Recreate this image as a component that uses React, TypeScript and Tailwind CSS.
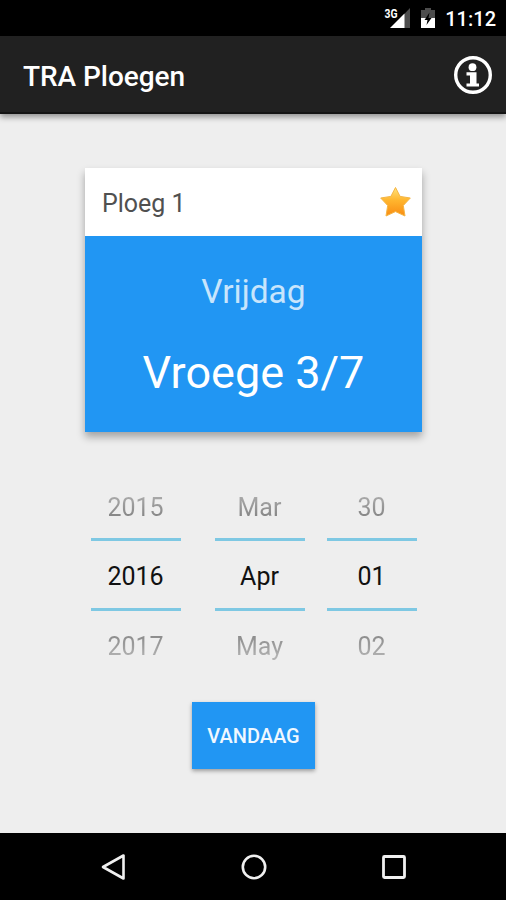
import React, { useState } from 'react';

interface PickerColumnProps {
  values: string[];
  onStep: (step: number) => void;
}

const StatusBar: React.FC = () => (
  <div className="flex h-9 items-center justify-end bg-black pr-[10px] text-white">
    <svg width="28" height="28" viewBox="0 0 28 28" className="mr-[9px]">
      <path d="M27 4v20H8z" fill="#4d4d4d" />
      <path d="M21.500 9.500V24H7z" fill="#fff" />
      <text x="1.500" y="13.500" fontSize="12" fontWeight="700" fill="#fff" stroke="#000" strokeWidth="2" paintOrder="stroke" textLength="13" lengthAdjust="spacingAndGlyphs">3G</text>
    </svg>
    <svg width="16" height="22" viewBox="0 0 16 22" className="mr-[9px]">
      <path d="M5 1h6v2h4v8H1V3h4z" fill="#4d4d4d" />
      <path d="M1 11h14v10H1z" fill="#fff" />
      <path d="M9.500 5.500L4.500 13h3l-1 5L11.500 11h-3z" fill="#000" />
    </svg>
    <span className="pt-[2px] text-[20px] font-medium leading-none">11:12</span>
  </div>
);

const InfoIcon: React.FC = () => (
  <svg width="40" height="40" viewBox="0 0 40 40" className="mt-[2px]">
    <circle cx="20" cy="20" r="17.300" fill="none" stroke="#fff" strokeWidth="3.400" />
    <circle cx="19.500" cy="12.200" r="3.900" fill="#fff" />
    <path d="M13.500 17.200h10v11.300H26V31.500H13.500v-3h3.500v-8h-3.500z" fill="#fff" />
  </svg>
);

const StarIcon: React.FC = () => (
  <svg width="34" height="34" viewBox="0 0 34 34">
    <defs>
      <linearGradient id="star" x1="0" y1="0" x2="0" y2="1">
        <stop offset="0" stopColor="#ffe37a" />
        <stop offset="0.45" stopColor="#ffb52e" />
        <stop offset="1" stopColor="#f98c12" />
      </linearGradient>
    </defs>
    <path
      d="M17.500 2.500l4.600 8.900 10.200 1.600-7 7.500 1.700 10.500-9.500-4.400-9.500 4.400 1.700-10.500-7-7.500 10.200-1.600z"
      fill="url(#star)"
      stroke="#f5b544"
      strokeWidth="1"
      strokeLinejoin="round"
    />
  </svg>
);

const PickerColumn: React.FC<PickerColumnProps> = ({ values, onStep }) => (
  <div className="flex w-[90px] flex-col text-center text-[25px]">
    <button
      onClick={() => onStep(-1)}
      className="h-[62px] bg-linear-to-b from-[#b8b8b8] from-20% to-[#777777] to-80% bg-clip-text leading-[64px] text-transparent"
    >
      {values[0]}
    </button>
    <div className="h-[73px] border-y-[3px] border-[#7ec8e3] leading-[71px] text-[#111111]">{values[1]}</div>
    <button
      onClick={() => onStep(1)}
      className="h-[62px] bg-linear-to-b from-[#777777] from-20% to-[#b8b8b8] to-80% bg-clip-text pt-[5px] leading-[62px] text-transparent"
    >
      {values[2]}
    </button>
  </div>
);

const today = new Date(2016, 3, 1);
const months = ['Jan', 'Feb', 'Mar', 'Apr', 'May', 'Jun', 'Jul', 'Aug', 'Sep', 'Oct', 'Nov', 'Dec'];

const App: React.FC = () => {
  const [year, setYear] = useState<number>(today.getFullYear());
  const [month, setMonth] = useState<number>(today.getMonth());
  const [day, setDay] = useState<number>(today.getDate());

  const wrap = (value: number, size: number) => (value + size) % size;
  const daysInMonth = new Date(year, month + 1, 0).getDate();
  const formatDay = (value: number) => String(wrap(value - 1, daysInMonth) + 1).padStart(2, '0');

  const handleToday = () => {
    setYear(today.getFullYear());
    setMonth(today.getMonth());
    setDay(today.getDate());
  };

  return (
    <div className="flex h-[900px] w-[506px] flex-col overflow-hidden bg-[#eeeeee] font-[Roboto,sans-serif]">
      <StatusBar />
      <header className="flex h-[78px] items-center justify-between border-b-2 border-[#141414] bg-[#212121] pl-[23px] pr-[13px] shadow-[0_3px_6px_rgba(0,0,0,0.4)]">
        <h1 className="pt-[5px] text-[28px] font-medium leading-none tracking-[-0.05px] text-white">TRA Ploegen</h1>
        <InfoIcon />
      </header>

      <main className="flex flex-1 flex-col items-center pl-px pt-[54px]">
        <section className="w-[337px] shadow-[0_5px_8px_rgba(0,0,0,0.32)]">
          <div className="flex h-[68px] items-center justify-between bg-white pl-[17px] pr-[10px]">
            <span className="pt-[3px] text-[25px] leading-none text-[#505050]">Ploeg 1</span>
            <StarIcon />
          </div>
          <div className="flex h-[196px] flex-col items-center bg-[#2196f3] pt-[36px]">
            <span className="text-[33.500px] leading-[40px] text-[#c8e5fc]">Vrijdag</span>
            <span className="mt-[34px] text-[45px] leading-[54px] text-white">Vroege 3/7</span>
          </div>
        </section>

        <section className="mt-[44px] flex w-[326px]">
          <PickerColumn values={[String(year - 1), String(year), String(year + 1)]} onStep={(step) => setYear(year + step)} />
          <div className="w-[34px]" />
          <PickerColumn
            values={[months[wrap(month - 1, 12)], months[month], months[wrap(month + 1, 12)]]}
            onStep={(step) => setMonth(wrap(month + step, 12))}
          />
          <div className="w-[22px]" />
          <PickerColumn
            values={[formatDay(day - 1), formatDay(day), formatDay(day + 1)]}
            onStep={(step) => setDay(wrap(day - 1 + step, daysInMonth) + 1)}
          />
        </section>

        <button
          onClick={handleToday}
          className="mt-[29px] h-[67px] w-[123px] bg-[#2196f3] pt-[1px] text-[20px] font-medium text-[#f0f8ff] shadow-[0_2px_4px_rgba(0,0,0,0.35)]"
        >
          VANDAAG
        </button>
      </main>

      <nav className="flex h-[67px] items-center justify-between bg-black pl-[99px] pr-[97px]">
        <svg width="30" height="30" viewBox="0 0 30 30" fill="none" stroke="#f0f0f0" strokeWidth="2.600" strokeLinejoin="round">
          <path d="M24.500 3.500v23L4 15z" />
        </svg>
        <svg width="30" height="30" viewBox="0 0 30 30" fill="none" stroke="#f0f0f0" strokeWidth="2.600">
          <circle cx="15" cy="15" r="11.200" />
        </svg>
        <svg width="30" height="30" viewBox="0 0 30 30" fill="none" stroke="#f0f0f0" strokeWidth="2.800">
          <rect x="4.500" y="4.500" width="21" height="21" rx="1" />
        </svg>
      </nav>
    </div>
  );
};

export default App;
